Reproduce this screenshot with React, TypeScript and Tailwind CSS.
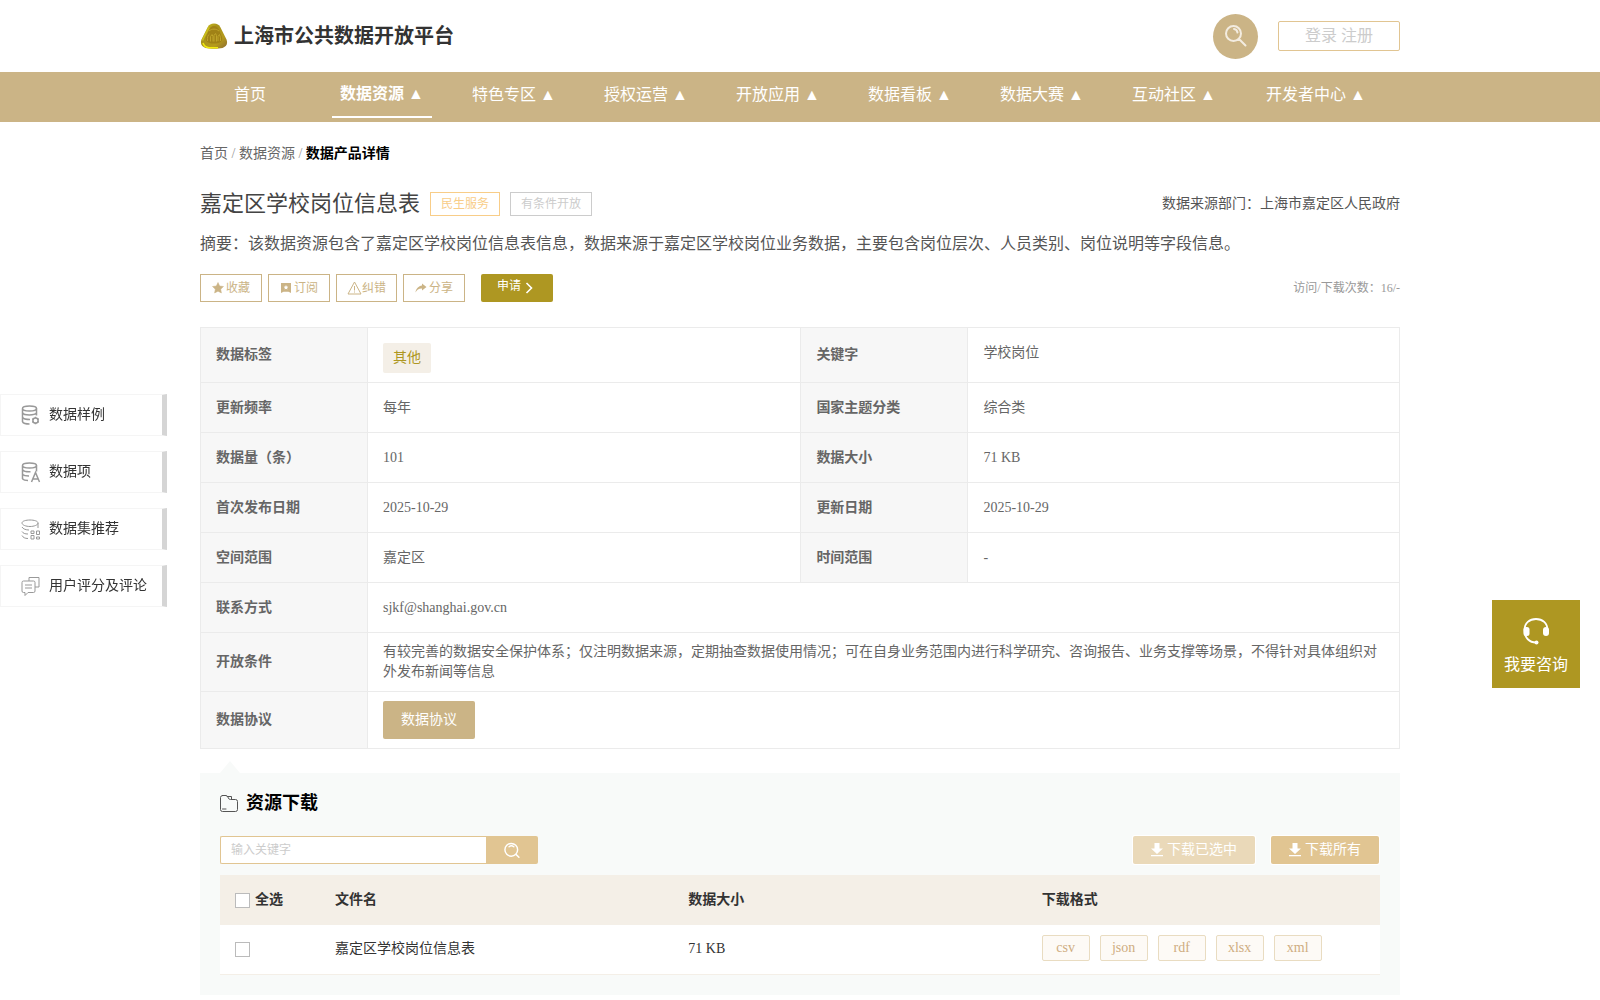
import type { ReactNode } from "react";

const navItems = [
  { label: "首页", menu: false },
  { label: "数据资源", menu: true, active: true },
  { label: "特色专区", menu: true },
  { label: "授权运营", menu: true },
  { label: "开放应用", menu: true },
  { label: "数据看板", menu: true },
  { label: "数据大赛", menu: true },
  { label: "互动社区", menu: true },
  { label: "开发者中心", menu: true },
];

const pairs = [
  ["更新频率", "每年", "国家主题分类", "综合类"],
  ["数据量（条）", "101", "数据大小", "71 KB"],
  ["首次发布日期", "2025-10-29", "更新日期", "2025-10-29"],
  ["空间范围", "嘉定区", "时间范围", "-"],
];

const formats = ["csv", "json", "rdf", "xlsx", "xml"];

function Logo() {
  return (
    <svg width="28" height="26" viewBox="0 0 28 26" aria-hidden="true">
      <defs>
        <linearGradient id="gold" x1="0" y1="0" x2="1" y2="1">
          <stop offset="0" stopColor="#d8cf1c" />
          <stop offset="0.35" stopColor="#a8931a" />
          <stop offset="0.7" stopColor="#b59a1c" />
          <stop offset="1" stopColor="#8a6a30" />
        </linearGradient>
      </defs>
      <path d="M14 0.5c3 0 5 1 6.500 4l6 12c1.500 4 0 7-4 8.500-5 1-12 1-17 0C1.500 23.500 0 20.500 1.500 16.500l6-12C9 1.500 11 .5 14 .5z" fill="url(#gold)" />
      <path d="M9 4.500c-2 4-5 9-6.500 13" fill="none" stroke="#c9bd1c" strokeWidth="1.800" />
      <path d="M3 20c1 3 3 4.500 6 4.800h9" fill="none" stroke="#f0ea10" strokeWidth="1.600" />
      <path d="M14 3c2.500 0 4 2 5 4l3 7c.8 4-1 6.500-8 6.500S5.200 18 6 14l3-7c1-2 2.500-4 5-4z" fill="#a08216" />
      <path d="M7.500 18c-.5-4 .5-6 2-7M10.500 18.500v-5l1.500-2 1 2v5M14 18.500v-6l1.500-2 1 2v6M18 18v-4.500l1.500-2 1 3V18M9 8c3-2.500 7-2.500 10 0" fill="none" stroke="#bfa42a" strokeWidth="1" />
    </svg>
  );
}

function Search({ className, inner }: { className: string; inner: string }) {
  return (
    <svg className={className} viewBox="0 0 22 22" fill="none" stroke="currentColor" strokeLinecap="round" aria-hidden="true">
      <path d={inner} strokeWidth="2" />
    </svg>
  );
}

function Download() {
  return (
    <svg width="12" height="14" viewBox="0 0 12 14" fill="currentColor" aria-hidden="true">
      <path d="M3.500 0h5v5.500H12L6 11 0 5.500h3.500zM0 12h12v1.200H0z" />
    </svg>
  );
}

const drum = "M1.500 3.500C1.500 2 5 1 8.500 1s7 1 7 2.500S12 6 8.500 6s-7-1-7-2.500zV17";

const sideItems: { label: string; icon: ReactNode }[] = [
  {
    label: "数据样例",
    icon: (
      <>
        <path d={drum} />
        <path d="M15.500 3.500v7M1.500 8c1.500 2.500 12 2.500 14 0M1.500 12.500c1 1.500 4 2 7.500 2M1.500 17c1 1.500 4 2 7 2" />
        <circle cx="14.500" cy="15.500" r="2.600" />
        <path d="M14.500 11.800v1.200M14.500 18v1.200M11.300 13.700l1 .6M16.700 16.700l1 .6M17.700 13.700l-1 .6M12.300 16.700l-1 .6" />
      </>
    ),
  },
  {
    label: "数据项",
    icon: (
      <>
        <path d={drum} />
        <path d="M15.500 3.500v6M1.500 8c1.500 1.500 5 2 8 1.800M1.500 12.500c1.500 1.300 3.500 1.500 6.500 1.500M1.500 17c1 1 3 1.500 5.500 1.500" />
        <path d="M10.500 20l4-9.500 4 9.500M12 17h5" />
      </>
    ),
  },
  {
    label: "数据集推荐",
    icon: (
      <g strokeWidth="1">
        <path d="M1 4c0-2 4-3 8-3s8 1 8 3-4 3.500-8 3.500S1 6 1 4zM17 4v5M1 8c1 2 4 3 7 3M1 12.500c1 1.800 3 2.500 6 2.500M1 16.500C2 18.500 4 19.500 7 19.500" />
        <path d="M10 12h3v2.500h-3zM15.500 12h3v3.500h-3zM10 16.500h3v3.500h-3zM15.500 18h3v2h-3z" />
      </g>
    ),
  },
  {
    label: "用户评分及评论",
    icon: (
      <g strokeWidth="1">
        <path d="M2.500 5h10q1.500 0 1.500 1.500V15q0 1.500-1.500 1.500H7L4 19.500v-3H2.500Q1 16.500 1 15V6.500Q1 5 2.500 5z" />
        <path d="M4 9h7M4 12h7M8 5V1.500h10V11h-4" />
      </g>
    ),
  },
];

const outline = "flex h-7 items-center justify-center border border-[#cbb486] px-[11px] text-xs text-[#cbb486]";
const th = "h-[50px] border border-[#ebebeb] bg-[#f7f7f7] px-[15px] text-left font-bold";
const td = "border border-[#ebebeb] px-[15px] py-[9px]";

export default function App() {
  return (
    <div className="bg-white pb-[5px] font-['Liberation_Serif','Noto_Sans_CJK_SC',serif] text-sm leading-5 text-[#666]">
      <header className="mx-auto flex h-[72px] max-w-[1200px] items-center">
        <h1 className="flex items-center gap-[6px] text-xl font-bold text-[#333]">
          <Logo />
          上海市公共数据开放平台
        </h1>
        <button type="button" aria-label="搜索" className="ml-auto flex size-[45px] items-center justify-center rounded-full bg-[#cbb486] text-[#f3ece0]">
          <Search className="size-[22px]" inner="M8.500 1a7.500 7.500 0 1 1 0 15a7.500 7.500 0 1 1 0-15zM9 4c2 .3 3.200 1.600 3.500 3.500M14 14l6.500 6.500" />
        </button>
        <div className="ml-5 flex h-[30px] w-[122px] items-center justify-center gap-1 rounded-xs border border-[#e1c592] text-base leading-5 text-[#ccc]">
          <a href="#login">登录</a>
          <a href="#register">注册</a>
        </div>
      </header>

      <nav className="bg-[#cbb486]">
        <div className="mx-auto flex h-[50px] max-w-[1200px] gap-8 text-base text-white">
          {navItems.map((item) => (
            <a
              key={item.label}
              href="#nav"
              className={`flex h-[46px] min-w-[100px] items-center justify-center px-2 whitespace-nowrap last:px-[10px] ${
                item.active ? "border-b-2 border-white font-bold" : ""
              }`}
            >
              {item.label}
              {item.menu && " ▲"}
            </a>
          ))}
        </div>
      </nav>

      <main className="mx-auto max-w-[1200px]">
        <div className="pt-[22px]">
          <a href="#home">首页</a> <span className="text-[#999]">/</span> <a href="#data">数据资源</a>{" "}
          <span className="text-[#999]">/</span> <strong className="text-black">数据产品详情</strong>
        </div>

        <div className="mt-6 flex items-center gap-[10px]">
          <h2 className="text-[22px] leading-8 text-[#444]">嘉定区学校岗位信息表</h2>
          <span className="flex h-6 items-center border border-[#f8cd88] px-[10px] text-xs text-[#f8cd88]">民生服务</span>
          <span className="flex h-6 items-center border border-[#ccc] px-[10px] text-xs text-[#ccc]">有条件开放</span>
          <span className="ml-auto text-[#555]">数据来源部门：上海市嘉定区人民政府</span>
        </div>

        <p className="mt-3 text-base leading-6 text-[#555]">
          摘要：该数据资源包含了嘉定区学校岗位信息表信息，数据来源于嘉定区学校岗位业务数据，主要包含岗位层次、人员类别、岗位说明等字段信息。
        </p>

        <div className="mt-[18px] flex items-center gap-[6px]">
          <button type="button" className={outline}>
            <svg width="12" height="12" viewBox="0 0 24 24" fill="currentColor" className="mr-0.5">
              <path d="M12 1l3.300 7 7.700 1-5.600 5.300L18.800 22 12 18.300 5.200 22l1.400-7.700L1 9l7.700-1z" stroke="currentColor" strokeLinejoin="round" />
            </svg>
            收藏
          </button>
          <button type="button" className={outline}>
            <svg width="12" height="12" viewBox="0 0 12 12" fill="currentColor" className="mr-0.5">
              <path fillRule="evenodd" d="M1 1h10v10L8.500 9.800h-5L1 11zM6 3L5.300 4.600l-1.600.2 1.200 1.100-.3 1.700L6 6.800l1.400.8-.3-1.700 1.200-1.100-1.600-.2z" />
            </svg>
            订阅
          </button>
          <button type="button" className="flex h-7 items-center justify-center border border-[#cbb486] px-[10px] text-xs text-[#cbb486]">
            <svg width="15" height="14" viewBox="0 0 15 14" fill="none" stroke="currentColor">
              <path d="M7.500 1l6.500 12H1zM7.500 5v4.500M7.500 10.500v1" />
            </svg>
            纠错
          </button>
          <button type="button" className={outline}>
            <svg width="12" height="12" viewBox="0 0 12 12" fill="currentColor" className="mr-0.5">
              <path d="M7 1.500L11.500 5 7 8.500v-2C4 6.300 2 7.500.5 10.500 1 6.500 3.500 4 7 3.500z" />
            </svg>
            分享
          </button>
          <button type="button" className="ml-[10px] flex h-7 items-center rounded-xs bg-[#ae9722] pr-5 pb-1 pl-4 text-xs text-white">
            申请
            <svg width="8" height="12" viewBox="0 0 8 12" fill="none" stroke="currentColor" strokeWidth="1.600" className="mt-1 ml-1">
              <path d="M1.500 1L6.500 6l-5 5" />
            </svg>
          </button>
          <span className="ml-auto text-xs text-[#999]">访问/下载次数：16/-</span>
        </div>

        <table className="mt-[25px] w-full table-fixed border-collapse">
          <colgroup>
            <col className="w-[167px]" />
            <col />
            <col className="w-[167px]" />
            <col className="w-[36%]" />
          </colgroup>
          <tbody>
            <tr>
              <th className={th}>数据标签</th>
              <td className="border border-[#ebebeb] px-[15px] pt-[15px] pb-[9px]">
                <span className="block w-fit rounded-xs bg-[#f4efe7] px-[10px] py-[5px] text-[#ae9722]">其他</span>
              </td>
              <th className={th}>关键字</th>
              <td className="border border-[#ebebeb] px-[15px] py-[15px] align-top">学校岗位</td>
            </tr>
            {pairs.map(([a, b, c, d]) => (
              <tr key={a}>
                <th className={th}>{a}</th>
                <td className={td}>{b}</td>
                <th className={th}>{c}</th>
                <td className={td}>{d}</td>
              </tr>
            ))}
            <tr>
              <th className={th}>联系方式</th>
              <td className={td} colSpan={3}>sjkf@shanghai.gov.cn</td>
            </tr>
            <tr>
              <th className={th}>开放条件</th>
              <td className={td} colSpan={3}>
                有较完善的数据安全保护体系；仅注明数据来源，定期抽查数据使用情况；可在自身业务范围内进行科学研究、咨询报告、业务支撑等场景，不得针对具体组织对外发布新闻等信息
              </td>
            </tr>
            <tr>
              <th className={th}>数据协议</th>
              <td className={td} colSpan={3}>
                <button type="button" className="block h-[38px] rounded-xs bg-[#cbb486] px-[18px] text-white">数据协议</button>
              </td>
            </tr>
          </tbody>
        </table>

        <svg width="20" height="12" viewBox="0 0 20 12" className="mt-3 ml-5 block" aria-hidden="true">
          <path d="M10 0l10 12H0z" fill="#f8faf9" />
        </svg>
        <section className="bg-[#f8faf9] px-5 pt-[18px] pb-5">
          <h3 className="flex items-center gap-2 text-lg leading-6 font-bold text-black">
            <svg width="18" height="17" viewBox="0 0 18 17" fill="none" stroke="#555" strokeLinejoin="round" strokeLinecap="round">
              <path d="M2.500.5h4Q7 .5 7.500 1.500L9 4q.5.500 1.500.5h5q2 0 2 2v8q0 2-2 2h-13q-2 0-2-2v-12q0-2 2-2zM7 1.500h4.500v3M2.500 14H6" />
            </svg>
            资源下载
          </h3>

          <div className="mt-[21px] flex">
            <input
              type="text"
              aria-label="输入关键字"
              placeholder="输入关键字"
              className="h-7 w-[266px] rounded-l-xs border border-r-0 border-[#e1c592] bg-white px-[10px] text-xs outline-none placeholder:text-[#ccc]"
            />
            <button type="button" aria-label="查询" className="flex h-7 w-[52px] items-center justify-center rounded-r-xs bg-[#e1c592] text-white">
              <Search className="size-4" inner="M10 2a8.500 8.500 0 1 1 0 17.500A8.500 8.500 0 1 1 10 2zM7 6.500c2-1.500 4.500-1.500 6.500 0M16.500 17l4 4" />
            </button>
            <button type="button" disabled className="ml-auto flex h-7 items-center gap-1 rounded-xs bg-[#ead9b9] px-[18px] text-white ring-1 ring-white">
              <Download />
              下载已选中
            </button>
            <button type="button" className="mr-px ml-4 flex h-7 items-center gap-1 rounded-xs bg-[#e1c592] px-[18px] text-white ring-1 ring-white">
              <Download />
              下载所有
            </button>
          </div>

          <table className="mt-[11px] w-full table-fixed text-left text-[#333]">
            <thead className="bg-[#f4efe7]">
              <tr className="h-[50px]">
                <th className="w-[100px] px-[15px]">
                  <label className="flex items-center gap-[5px]">
                    <input type="checkbox" className="size-[15px] appearance-none border border-[#bbb] bg-white" />
                    全选
                  </label>
                </th>
                <th className="px-[15px]">文件名</th>
                <th className="px-[15px]">数据大小</th>
                <th className="px-[15px]">下载格式</th>
              </tr>
            </thead>
            <tbody className="bg-white">
              <tr className="h-[49px] border-b border-[#f4efe7]">
                <td className="px-[15px]">
                  <input type="checkbox" aria-label="选择 嘉定区学校岗位信息表" className="block size-[15px] appearance-none border border-[#bbb] bg-white" />
                </td>
                <td className="px-[15px]">嘉定区学校岗位信息表</td>
                <td className="px-[15px]">71 KB</td>
                <td className="px-[15px] pb-[3px]">
                  <div className="flex gap-[10px]">
                    {formats.map((f) => (
                      <button key={f} type="button" className="h-[26px] w-12 rounded-xs border border-[#e9dcc1] bg-[#fdfaf6] text-[#cfad81]">
                        {f}
                      </button>
                    ))}
                  </div>
                </td>
              </tr>
            </tbody>
          </table>
        </section>
      </main>

      <aside className="fixed top-[394px] left-0 flex flex-col gap-[15px]">
        {sideItems.map((item) => (
          <a
            key={item.label}
            href="#section"
            className="flex h-[42px] w-[167px] items-center gap-2 border-y border-l border-y-[#f5f5f5] border-l-[#f5f5f5] border-r-[5px] border-r-[#d5d5d5] bg-white pl-5 whitespace-nowrap text-[#333]"
          >
            <svg width="20" height="21" viewBox="0 0 20 21" fill="none" stroke="#999" strokeWidth="1.500" className="shrink-0">
              {item.icon}
            </svg>
            {item.label}
          </a>
        ))}
      </aside>

      <button type="button" className="fixed top-[600px] right-5 flex size-[88px] flex-col items-center bg-[#ae9722] pt-[17px] text-base text-white">
        <svg width="28" height="28" viewBox="0 0 28 28" fill="none" stroke="currentColor" strokeWidth="1.800">
          <path d="M2.500 13C2.500 6 7.500 2 14 2s11.500 4 11.500 11M2.500 13c0 8 5 12.500 11.500 12.500" />
          <rect x="1.500" y="10" width="6" height="9" rx="2.500" fill="currentColor" stroke="none" />
          <rect x="21" y="10" width="6" height="9" rx="3" fill="currentColor" stroke="none" />
          <circle cx="14.500" cy="25.500" r="2" fill="currentColor" stroke="none" />
        </svg>
        <span className="mt-2 leading-6">我要咨询</span>
      </button>
    </div>
  );
}
